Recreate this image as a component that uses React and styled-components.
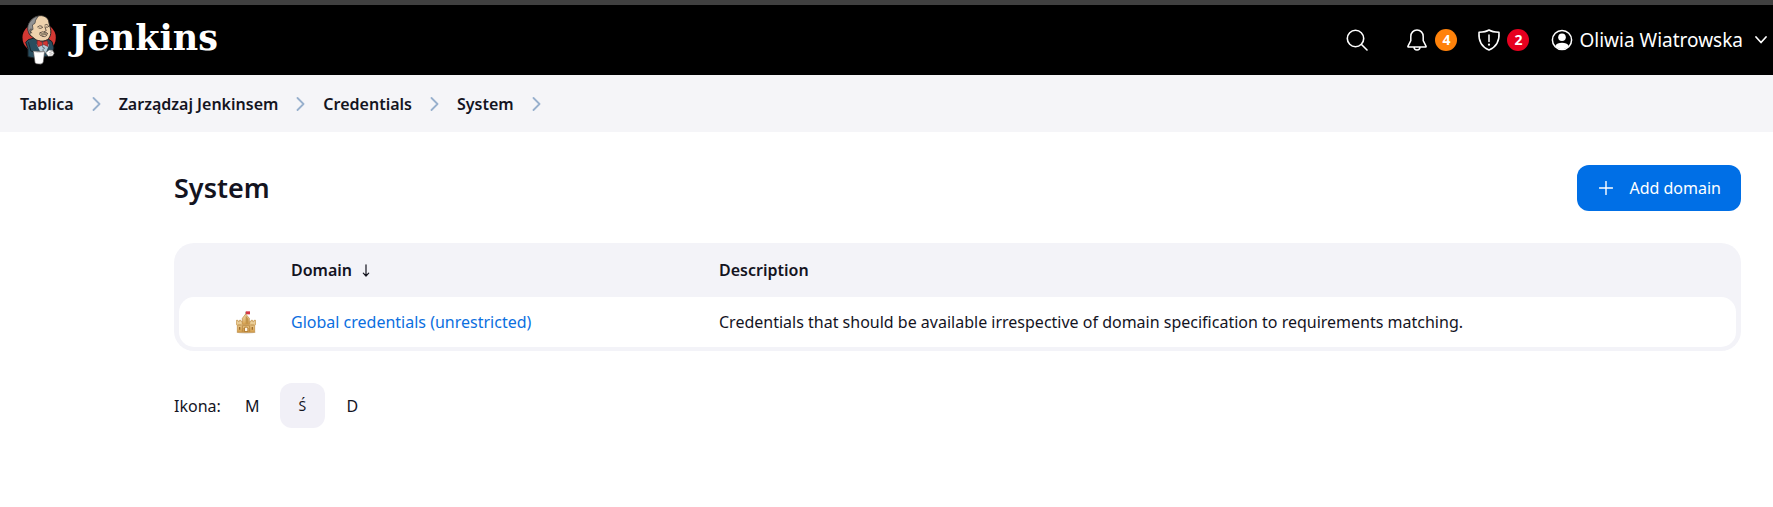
import React from "react";
import styled, { createGlobalStyle } from "styled-components";

const GlobalStyle = createGlobalStyle`
  *, *::before, *::after { box-sizing: border-box; }
  body {
    margin: 0;
    background: #fff;
    color: #14141f;
    font-family: "Noto Sans", "Open Sans", sans-serif;
    font-size: 16px;
    line-height: 24px;
  }
  a { color: inherit; text-decoration: none; }
  button { font: inherit; color: inherit; border: 0; background: none; padding: 0; cursor: pointer; }
`;

const Header = styled.header`
  display: flex;
  align-items: center;
  justify-content: space-between;
  height: 75px;
  padding: 0 6px 0 20px;
  border-top: 5px solid #404040;
  background: #000;
  color: #fff;
`;

const Brand = styled.a`
  display: flex;
  align-items: center;
  gap: 14px;
  font: 700 35px/44px "DejaVu Serif", serif;
`;

const BrandName = styled.span`
  padding-bottom: 4px;
`;

const HeaderActions = styled.div`
  display: flex;
  align-items: center;
`;

const HeaderButton = styled.button`
  display: flex;
  align-items: center;
  gap: ${(p) => p.$gap || 6}px;
  margin-right: ${(p) => p.$space || 0}px;
  font-size: ${(p) => (p.$large ? 19 : 16)}px;
`;

const Badge = styled.span`
  display: grid;
  place-items: center;
  width: 22px;
  height: 22px;
  border-radius: 50%;
  background: ${(p) => p.$color};
  font-size: 14px;
  font-weight: 700;
  line-height: 22px;
`;

const Chevron = styled.svg`
  margin-left: 6px;
`;

const Breadcrumbs = styled.nav`
  height: 57px;
  padding: 0 20px;
  background: #f5f5f8;
`;

const CrumbList = styled.ol`
  display: flex;
  align-items: center;
  height: 100%;
  margin: 0;
  padding: 0;
  list-style: none;
`;

const Crumb = styled.li`
  display: flex;
  align-items: center;
  gap: 18px;
  margin-right: 18px;
  font-weight: 600;
`;

const Main = styled.main`
  padding: 33px 32px 32px 174px;
`;

const TitleBar = styled.div`
  display: flex;
  align-items: center;
  justify-content: space-between;
  margin-bottom: 32px;
`;

const Title = styled.h1`
  margin: 0;
  font-size: 27px;
  line-height: 46px;
  font-weight: 600;
`;

const PrimaryButton = styled.button`
  display: flex;
  align-items: center;
  gap: 16px;
  height: 46px;
  padding: 0 20px 0 22px;
  border-radius: 12px;
  background: #006fe6;
  color: #fff;
`;

const TableFrame = styled.div`
  padding: 0 5px 4px;
  border-radius: 20px;
  background: #f3f3f8;
`;

const Table = styled.table`
  width: 100%;
  table-layout: fixed;
  border-spacing: 0;
`;

const HeadCell = styled.th`
  width: ${(p) => p.$width || "auto"};
  height: 54px;
  padding: 0 16px;
  text-align: left;
  font-weight: 600;
`;

const SortButton = styled.button`
  display: flex;
  align-items: center;
  gap: 10px;
`;

const Cell = styled.td`
  height: 50px;
  padding: 0 16px;
  background: #fff;
  &:first-child { border-radius: 15px 0 0 15px; }
  &:last-child { border-radius: 0 15px 15px 0; }
`;

const IconCell = styled(Cell)`
  padding: 0 19px 0 0;
  text-align: right;
  svg { display: block; margin-left: auto; }
`;

const DomainLink = styled.a`
  color: #0b6fe0;
`;

const IconSizes = styled.div`
  display: flex;
  align-items: center;
  gap: 5px;
  margin-top: 32px;
`;

const SizeLabel = styled.span`
  margin-right: 4px;
`;

const SizeButton = styled.button`
  width: 45px;
  height: 45px;
  border-radius: 12px;
  background: ${(p) => (p.$active ? "#f1f0f7" : "transparent")};
  font-size: ${(p) => (p.$active ? 14 : 16)}px;
`;

const stroke = { fill: "none", stroke: "currentColor", strokeLinecap: "round", strokeLinejoin: "round" };

function ButlerLogo() {
  return (
    <svg width="37" height="50" viewBox="31 27 114 156" aria-hidden="true">
      <ellipse cx="90" cy="98" rx="52" ry="47" fill="#d33833" />
      <path d="M55 132 48 112 56 104 77 98 102 108 120 103 130 110 136 130 127 153 83 163 55 157Z" fill="#294e5f" stroke="#171c20" strokeWidth="3" />
      <path d="M61 89C55 77 52 63 60 50 67 37 82 28 98 29 113 31 120 40 121 53L125 68C128 79 127 91 120 100 110 111 89 111 77 102Z" fill="#eed2ad" stroke="#252321" strokeWidth="3" />
      <path d="M61 88C54 78 51 62 61 49 66 40 77 32 87 31L79 43 77 53 69 58 71 72 65 75Z" fill="#919293" stroke="#303033" strokeWidth="2" />
      <path d="M66 71C58 68 60 82 67 83M85 64Q92 57 99 62M108 58Q115 53 119 60M89 68Q95 71 101 66M111 65Q117 67 121 62M108 64 112 76 106 79M93 82Q103 76 108 82 116 81 117 86 106 88 94 91 90 88 93 82M99 94Q108 97 114 91" {...stroke} stroke="#473c35" strokeWidth="2.5" />
      <path d="M94 84Q106 80 116 86L97 90Z" fill="#98886f" />
      <path d="M82 119 102 117 121 119 112 143 98 150Z" fill="#b6cbd5" />
      <path d="M84 107Q88 104 99 112L114 107Q119 110 117 125L104 119 87 126Q82 117 84 107Z" fill="#d33833" stroke="#7b2028" strokeWidth="2" />
      <path d="M101 112v10M100 126l7 4-6 6 4 5" {...stroke} stroke="#42515c" strokeWidth="2.5" />
      <path d="M57 113 64 139 80 145" {...stroke} stroke="#14242e" strokeWidth="3" />
      <path d="M72 140 107 141 103 174Q101 182 90 180 79 181 77 175Z" fill="#fff" stroke="#504b4b" strokeWidth="2" />
      <path d="M73 141Q88 148 106 142" {...stroke} stroke="#b8b8b8" strokeWidth="2" />
      <path d="M110 145 121 136 132 137 137 146 132 155 118 156Z" fill="#fff" stroke="#64605e" strokeWidth="2" />
      <path d="M123 144 131 141M124 149l7-1" {...stroke} stroke="#8b8584" strokeWidth="2" />
    </svg>
  );
}

function CastleIcon() {
  return (
    <svg width="20" height="23" viewBox="33 20 60 69" role="img" aria-label="Domain">
      <defs>
        <linearGradient id="stone" x1="0" y1="0" x2="0" y2="1">
          <stop offset="0" stopColor="#f1dcae" />
          <stop offset="1" stopColor="#d6a04d" />
        </linearGradient>
      </defs>
      <ellipse cx="63" cy="84" rx="29" ry="4" fill="#ded9d1" />
      <path d="M62 34V22" stroke="#8b6350" strokeWidth="2" />
      <path d="M63 21h12v9H63z" fill="#d53945" />
      <path d="M52 61V42L62 29 73 42V61Z" fill="url(#stone)" stroke="#bd8a42" strokeWidth="2" />
      <path d="M62 33 70 44V58H62Z" fill="#c29349" />
      <path d="M34 48h5v4h4v-4h5v4h4v8h22v-8h4v-4h5v4h4v-4h5v12l-3 4v20H37V64l-3-4Z" fill="url(#stone)" stroke="#bc8739" strokeWidth="2" />
      <path d="M38 62h12M76 62h12M52 64h22M52 64v18M74 64v18" stroke="#aa752e" strokeWidth="2" />
      <path d="M42 68h4v8h-4zM80 68h4v8h-4z" fill="#9e6c2b" />
      <path d="M56 83V72Q63 61 70 72V83Z" fill="#b78239" />
      <path d="M60 80V72Q63 67 67 72V80Z" fill="#fff8ea" />
    </svg>
  );
}

const SearchIcon = () => (
  <svg width="22" height="22" viewBox="0 0 22 22" aria-hidden="true">
    <g {...stroke} strokeWidth="1.6"><circle cx="9.5" cy="9.5" r="8.2" /><path d="m15.5 15.5 5.5 5.5" /></g>
  </svg>
);

const BellIcon = () => (
  <svg width="20" height="22" viewBox="0 0 20 22" aria-hidden="true">
    <path d="M10 1C6.4 1 3.8 3.8 3.8 7.5v4.2L1 17.2c-.3.6 0 .9.6.9h16.8c.6 0 .9-.3.6-.9l-2.8-5.5V7.5C16.2 3.8 13.6 1 10 1ZM7 18.2c.2 3.6 5.8 3.6 6 0" {...stroke} strokeWidth="1.5" />
  </svg>
);

const ShieldIcon = () => (
  <svg width="24" height="22" viewBox="0 0 24 22" aria-hidden="true">
    <path d="M12 1C9.5 2.6 6.3 3.1 2 3.2 1.4 11.5 4 17.7 12 21 20 17.7 22.6 11.5 22 3.2 17.7 3.1 14.5 2.6 12 1ZM12 6v6.5" {...stroke} strokeWidth="1.5" />
    <circle cx="12" cy="15.7" r="1.1" fill="currentColor" />
  </svg>
);

const UserIcon = () => (
  <svg width="22" height="22" viewBox="0 0 22 22" aria-hidden="true">
    <circle cx="11" cy="11" r="9.6" {...stroke} strokeWidth="1.5" />
    <circle cx="11" cy="8.3" r="3.8" fill="currentColor" />
    <path d="M4.2 17C6 12.6 16 12.6 17.8 17 14.5 21.2 7.5 21.2 4.2 17Z" fill="currentColor" />
  </svg>
);

const CRUMBS = ["Tablica", "Zarządzaj Jenkinsem", "Credentials", "System"];
const SIZES = ["M", "Ś", "D"];

export default function App() {
  return (
    <>
      <GlobalStyle />
      <Header>
        <Brand href="#"><ButlerLogo /><BrandName>Jenkins</BrandName></Brand>
        <HeaderActions>
          <HeaderButton aria-label="Search" $space={39}><SearchIcon /></HeaderButton>
          <HeaderButton aria-label="Notifications" $gap={8} $space={20}><BellIcon /><Badge $color="#ff820a">4</Badge></HeaderButton>
          <HeaderButton aria-label="Security warnings" $space={22}><ShieldIcon /><Badge $color="#e6001f">2</Badge></HeaderButton>
          <HeaderButton $large>
            <UserIcon />Oliwia Wiatrowska
            <Chevron width="12" height="8" viewBox="0 0 12 8" aria-hidden="true"><path d="m1 1 5 5.5L11 1" {...stroke} strokeWidth="1.7" /></Chevron>
          </HeaderButton>
        </HeaderActions>
      </Header>
      <Breadcrumbs aria-label="Breadcrumbs">
        <CrumbList>
          {CRUMBS.map((c) => (
            <Crumb key={c}>
              <a href="#">{c}</a>
              <svg width="9" height="14" viewBox="0 0 9 14" aria-hidden="true"><path d="m1.5 1 6 6-6 6" {...stroke} stroke="#98b0cd" strokeWidth="1.8" /></svg>
            </Crumb>
          ))}
        </CrumbList>
      </Breadcrumbs>
      <Main>
        <TitleBar>
          <Title>System</Title>
          <PrimaryButton>
            <svg width="14" height="14" viewBox="0 0 14 14" aria-hidden="true"><path d="M7 .5v13M.5 7h13" {...stroke} strokeWidth="1.4" /></svg>
            Add domain
          </PrimaryButton>
        </TitleBar>
        <TableFrame>
          <Table>
            <thead>
              <tr>
                <HeadCell $width="96px" />
                <HeadCell $width="428px"><SortButton>Domain
                  <svg width="8" height="13" viewBox="0 0 8 13" aria-hidden="true"><path d="M4 .8v11M1.3 9.2 4 12l2.7-2.8" {...stroke} strokeWidth="1.2" /></svg>
                </SortButton></HeadCell>
                <HeadCell>Description</HeadCell>
              </tr>
            </thead>
            <tbody>
              <tr>
                <IconCell><CastleIcon /></IconCell>
                <Cell><DomainLink href="#">Global credentials (unrestricted)</DomainLink></Cell>
                <Cell>Credentials that should be available irrespective of domain specification to requirements matching.</Cell>
              </tr>
            </tbody>
          </Table>
        </TableFrame>
        <IconSizes>
          <SizeLabel>Ikona:</SizeLabel>
          {SIZES.map((s) => <SizeButton key={s} $active={s === "Ś"}>{s}</SizeButton>)}
        </IconSizes>
      </Main>
    </>
  );
}
